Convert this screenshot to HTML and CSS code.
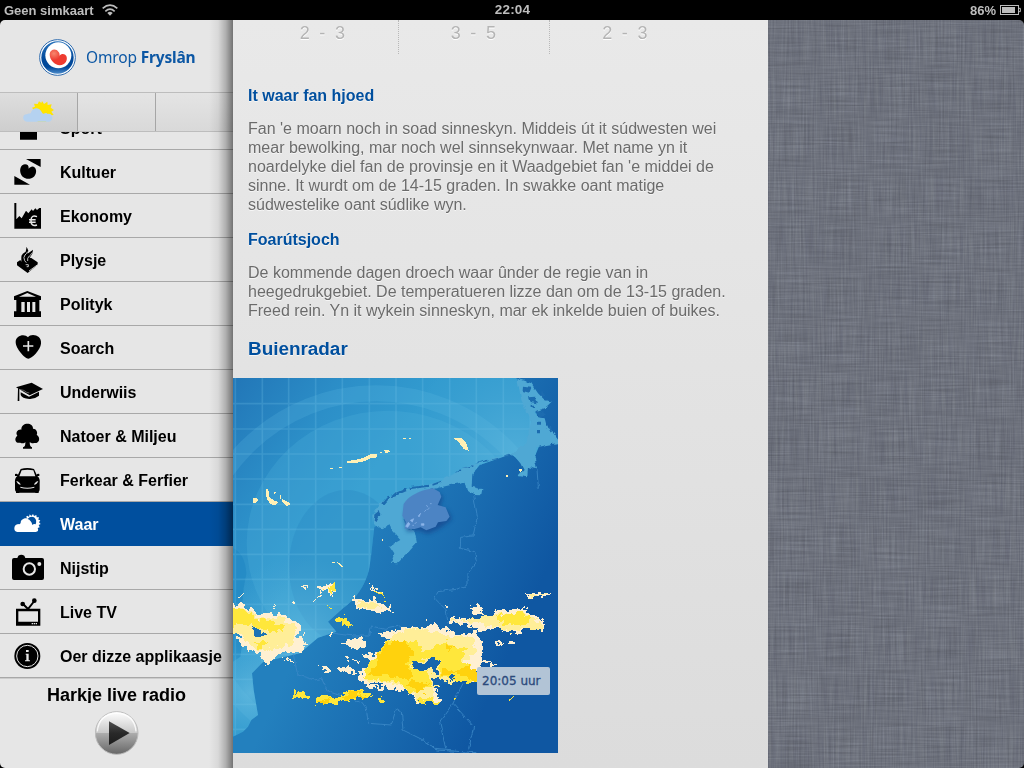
FILE: index.html
```html
<!DOCTYPE html>
<html lang="fy">
<head>
<meta charset="utf-8">
<title>Omrop Fryslân</title>
<link rel="stylesheet" href="styles.css">
</head>
<body>
<header class="status">
  <div class="status-left">Geen simkaart
    <svg class="wifi" viewBox="0 0 48 36"><g fill="none" stroke="#bdbdbd" stroke-width="5"><path d="M2 13Q24-6 46 13"/><path d="M10 22Q24 9 38 22"/></g><path d="M16 27Q24 20 32 27L24 35Z" fill="#bdbdbd"/></svg>
  </div>
  <div class="status-time">22:04</div>
  <div class="status-right">86%
    <svg class="battery" viewBox="0 0 63 30"><rect x="1.5" y="1.5" width="54" height="27" fill="none" stroke="#bdbdbd" stroke-width="3"/><rect x="6" y="6" width="39" height="18" fill="#bdbdbd"/><path d="M57 10h4v10h-4" fill="none" stroke="#bdbdbd" stroke-width="3"/></svg>
  </div>
</header>
<main class="app">
  <aside class="sidebar">
    <div class="brand">
      <svg class="logo" viewBox="0 0 111 111">
        <defs>
          <linearGradient id="ring" x1="0" y1="0" x2="0" y2="1"><stop offset="0" stop-color="#2a74bd"/><stop offset=".55" stop-color="#00489a"/><stop offset=".8" stop-color="#00489a"/><stop offset="1" stop-color="#4d8cca"/></linearGradient>
          <radialGradient id="heart" cx=".25" cy=".25" r=".7"><stop offset="0" stop-color="#f7876d"/><stop offset=".6" stop-color="#ee3b30"/></radialGradient>
        </defs>
        <circle cx="55.500" cy="55.500" r="53.500" fill="#fff" stroke="#2b69ad" stroke-width="3"/>
        <circle cx="55.500" cy="55.500" r="48.500" fill="url(#ring)"/>
        <circle cx="58" cy="49" r="39" fill="#fff"/>
        <path d="M58 38C51 27 33 31 32 45C31 62 48 79 62 79C80 78 87 62 82 51C78 43 67 43 61 50C63 44 61 41 58 38Z" fill="url(#heart)"/>
      </svg>
      <div class="brand-name">Omrop <b>Fryslân</b></div>
    </div>
    <div class="tabs">
      <div class="tab tab-active">
        <svg class="tab-icon" viewBox="0 0 93 63"><path d="M57 0l6 9 10-7 1 10 12-2-3 10 10 7-8 5 7 10-10 1 2 10-11 0-4 9H44L32 26l-5-6 9-3-3-9 11 1 4-8 7 5z" fill="#ffe400"/><path d="M12 62C-4 61-3 39 12 40C16 36 21 38 23 37C27 17 50 17 56 33Q59 39 62 38Q71 34 74 39C91 35 93 60 78 62Z" fill="#b5d2f0"/></svg>
      </div>
      <div class="tab"></div>
      <div class="tab"></div>
    </div>
    <nav class="menu">
      <div class="item"><svg class="icon" viewBox="0 0 144 132"><path d="M60 20h51v81H60z"/></svg>Sport</div>
      <div class="item"><svg class="icon" viewBox="0 0 144 132"><path d="M78 27h44v24zM43 78v26h47z"/><path d="M75 43C64 44 59 55 61 67C64 83 79 90 94 85C108 79 112 63 105 53C97 46 91 51 86 56Q87 43 75 43Z"/></svg>Kultuer</div>
      <div class="item"><svg class="icon" viewBox="0 0 144 132"><path d="M43 27h6v49l9-10 7 7 13-23 7 8 10-12 4 5 7-8 5 5 7-6 5 0v62H43z"/><path d="M111 68Q93 61 93 80Q93 99 111 93M87 77h20M87 85h20" fill="none" stroke="#e6e6e6" stroke-width="4.500"/></svg>Ekonomy</div>
      <div class="item"><svg class="icon" viewBox="0 0 144 132"><path d="M51 73l10-7 3 5v-14Q64 47 77 41L80 26l5 12-3 9 12-8 5-4-2 12-8 12 5 1 19 13v7L83 105 51 82z"/><path d="M83 41Q80 47 75 51Q69 58 74 68L79 74M97 44Q94 50 88 54Q81 60 83 69M77 80h8v6h-5M87 99L113 80" fill="none" stroke="#e6e6e6" stroke-width="2.500"/></svg>Plysje</div>
      <div class="item"><svg class="icon" viewBox="0 0 144 132"><path fill-rule="evenodd" d="M42 43L82 27l41 16v11h-5v34h5v17H42V88h7V54h-7zM57 44h51L82 33zM64 60h10v30H64zM81 60h9v30H81zM97 60h9v30H97z"/></svg>Polityk</div>
      <div class="item"><svg class="icon" viewBox="0 0 144 132"><path d="M47 48C47 27 75 22 84 34C93 21 126 27 123 53C121 72 95 98 85 98C75 98 47 68 47 48Z"/><path d="M85 45v31M69 60h31" stroke="#e6e6e6" stroke-width="5"/></svg>Soarch</div>
      <div class="item"><svg class="icon" viewBox="0 0 144 132"><path d="M48 52L95 38l34 19-40 19zM62 67l25 13 30-15v12Q103 88 88 87Q66 86 62 75zM54 56h4v37h-5z"/><path d="M57 58Q74 60 80 67L88 69" fill="none" stroke="#bbb" stroke-width="1.500"/></svg>Underwiis</div>
      <div class="item"><svg class="icon" viewBox="0 0 144 132"><path d="M64 47C63 24 100 24 99 44C112 44 113 59 110 62C124 72 117 90 102 87C97 90 92 86 89 85Q89 98 96 100v4H69v-4Q77 98 76 84C71 91 64 87 61 86C46 90 41 73 52 65C45 56 54 45 64 47Z"/></svg>Natoer &amp; Miljeu</div>
      <div class="item"><svg class="icon" viewBox="0 0 144 132"><path fill-rule="evenodd" d="M62 33Q82 27 102 33L110 50q2-4 8-2v6h-6q9 7 7 22v18q0 8-9 10H54q-9-2-9-10V77q-2-16 7-23h-7v-6q6-2 9 2zM65 37l-7 18h48l-6-18q-17-3-35 0zM49 69q4 11 13 11-2-8-13-11zM115 69q-11 3-13 11 9 0 13-11zM61 86q21 6 42 0v3q-21 6-42 0z"/><path d="M48 98h10v7H48zM106 98h10v7h-10z"/></svg>Ferkear &amp; Ferfier</div>
      <div class="item item-active"><svg class="icon" viewBox="0 0 144 132"><path fill="#fff" d="M52 90C39 89 40 67 55 66Q59 68 62 63C62 51 76 47 83 50L78 44l5-3 4 4 2-8 5 5 5-6 3 6 7-3 1 7 7 0-2 7 6 2-4 6 5 5-6 3 3 7-6 2Q118 89 107 90Z"/><path d="M83 51Q91 41 102 46Q112 54 107 67Q101 65 97 69Q94 55 83 51Z" fill="#004f9e"/></svg>Waar</div>
      <div class="item"><svg class="icon" viewBox="0 0 144 132"><path d="M42 36h10l3-7q9-5 18 0l3 7h50q6 0 6 6v54q0 6-6 6H42q-6 0-6-6V42q0-6 6-6z"/><circle cx="88" cy="69" r="17" fill="none" stroke="#e6e6e6" stroke-width="6"/><circle cx="118" cy="54" r="6" fill="#e6e6e6"/></svg>Nijstip</div>
      <div class="item"><svg class="icon" viewBox="0 0 144 132"><path fill-rule="evenodd" d="M48 56h73v51H48zM55 64v31h59V64z"/><path d="M69 42l15 15 19-24" fill="none" stroke="#000" stroke-width="6"/><circle cx="68" cy="42" r="7"/><circle cx="103" cy="32" r="7"/><path d="M95 101h17" stroke="#e6e6e6" stroke-width="4" stroke-dasharray="4 2"/></svg>Live TV</div>
      <div class="item"><svg class="icon" viewBox="0 0 144 132"><circle cx="82" cy="66" r="39"/><circle cx="82" cy="66" r="32" fill="none" stroke="#e6e6e6" stroke-width="3"/><path d="M78 48h8v6h-8zM77 59h9v20h4v3H75v-3h4V62h-2z" fill="#e6e6e6"/></svg>Oer dizze applikaasje</div>
    </nav>
    <footer class="radio">
      <div class="radio-label">Harkje live radio</div>
      <svg class="play" viewBox="0 0 132 132">
        <defs>
          <linearGradient id="btn" x1="0" y1="0" x2="0" y2="1"><stop offset="0" stop-color="#fff"/><stop offset=".5" stop-color="#c8c8c8"/><stop offset=".51" stop-color="#acacac"/><stop offset="1" stop-color="#666"/></linearGradient>
          <linearGradient id="tri" x1="0" y1="0" x2="0" y2="1"><stop offset="0" stop-color="#505050"/><stop offset=".5" stop-color="#292929"/><stop offset="1" stop-color="#1c1c1c"/></linearGradient>
        </defs>
        <circle cx="65" cy="66" r="64" fill="url(#btn)" stroke="#bcbcbc" stroke-width="3"/>
        <path d="M7 61Q12 9 65 6Q118 9 123 61" fill="none" stroke="#fff" stroke-width="4" opacity=".8"/>
        <path d="M42 31l62 35-62 36z" fill="url(#tri)"/>
      </svg>
    </footer>
  </aside>
  <section class="content">
    <div class="wind"><div class="wind-cell">2 - 3</div><div class="wind-cell">3 - 5</div><div class="wind-cell">2 - 3</div></div>
    <article class="article">
      <h3>It waar fan hjoed</h3>
      <p>Fan 'e moarn noch in soad sinneskyn. Middeis út it súdwesten wei<br>mear bewolking, mar noch wel sinnsekynwaar. Met name yn it<br>noardelyke diel fan de provinsje en it Waadgebiet fan 'e middei de<br>sinne. It wurdt om de 14-15 graden. In swakke oant matige<br>súdwestelike oant súdlike wyn.</p>
      <h3>Foarútsjoch</h3>
      <p>De kommende dagen droech waar ûnder de regie van in<br>heegedrukgebiet. De temperatueren lizze dan om de 13-15 graden.<br>Freed rein. Yn it wykein sinneskyn, mar ek inkelde buien of buikes.</p>
      <h2>Buienradar</h2>
    </article>
    <div class="radar">
      <svg class="map" viewBox="0 24 975 1125">
        <defs>
          <linearGradient id="land" gradientUnits="userSpaceOnUse" x1="230" y1="760" x2="760" y2="1000"><stop offset="0" stop-color="#2380be"/><stop offset=".5" stop-color="#1a6db1"/><stop offset="1" stop-color="#0f57a2"/></linearGradient>
          <linearGradient id="sea" gradientUnits="userSpaceOnUse" x1="0" y1="40" x2="400" y2="330"><stop offset="0" stop-color="#2277b8"/><stop offset=".55" stop-color="#2c8fc8"/><stop offset="1" stop-color="#329bcf"/></linearGradient>
          <radialGradient id="glow" gradientUnits="userSpaceOnUse" cx="200" cy="820" r="260"><stop offset="0" stop-color="#7cc9e8" stop-opacity=".5"/><stop offset="1" stop-color="#59b2db" stop-opacity="0"/></radialGradient>
          <radialGradient id="glow2" gradientUnits="userSpaceOnUse" cx="850" cy="240" r="330"><stop offset="0" stop-color="#6fc1e3" stop-opacity=".45"/><stop offset="1" stop-color="#59b2db" stop-opacity="0"/></radialGradient>
          <radialGradient id="glow3" gradientUnits="userSpaceOnUse" cx="50" cy="970" r="150"><stop offset="0" stop-color="#6fc1e3" stop-opacity=".6"/><stop offset="1" stop-color="#59b2db" stop-opacity="0"/></radialGradient>
          <clipPath id="seaclip"><path d="M0 24H850L880 80 910 130 930 200 905 260 880 290 835 252 740 285 700 334 610 345 500 390 440 465 424 470 414 560 408 600C396 650 365 690 330 715L285 755 310 785 255 803 200 850 90 876 57 910 62 960 75 1035 55 1050 45 1070 30 1085 0 1100Z"/></clipPath>
          <filter id="rough" x="-5%" y="-5%" width="110%" height="110%"><feTurbulence type="fractalNoise" baseFrequency=".06" numOctaves="2" seed="4"/><feDisplacementMap in="SourceGraphic" scale="32" xChannelSelector="R" yChannelSelector="G"/></filter>
          <filter id="coast" x="-5%" y="-5%" width="110%" height="110%"><feTurbulence type="fractalNoise" baseFrequency=".06" numOctaves="2" seed="9"/><feDisplacementMap in="SourceGraphic" scale="12" xChannelSelector="R" yChannelSelector="G"/></filter>
          <filter id="soft" x="-20%" y="-20%" width="140%" height="140%"><feGaussianBlur stdDeviation="7"/></filter>
        </defs>
        <rect y="24" width="975" height="1125" fill="url(#land)"/>
        <g clip-path="url(#seaclip)">
          <rect y="24" width="975" height="1125" fill="url(#sea)"/>
          <circle cx="430" cy="620" r="550" fill="none" stroke="#5fbce2" stroke-width="48" opacity=".22"/>
          <ellipse cx="465" cy="520" rx="424" ry="398" fill="#50b3dd" opacity=".26"/>
          <ellipse cx="340" cy="590" rx="172" ry="230" fill="#217fbe" opacity=".24"/>
          <rect y="24" width="975" height="1125" fill="url(#glow)"/>
          <rect y="24" width="975" height="1125" fill="url(#glow2)"/>
          <path d="M0 535Q36 550 40 610Q20 700 32 790L22 860 0 875Z" fill="#2389c4" opacity=".8"/>
          <rect y="24" width="975" height="1125" fill="url(#glow3)"/>
          <path d="M7 24v1125M88 24v1125M167 24v1125M248 24v1125M328 24v1125M409 24v1125M489 24v1125M569 24v1125M650 24v1125M730 24v1125M811 24v1125M892 24v1125M0 101h975M0 177h975M0 252h975M0 327h975M0 403h975M0 478h975M0 553h975M0 628h975M0 703h975M0 778h975M0 853h975M0 928h975M0 1003h975M0 1078h975" fill="none" stroke="#74c4e6" stroke-width="5" opacity=".25"/>
        </g>
        <g filter="url(#coast)">
          <path d="M853 26L895 40 915 70 935 90 955 96 935 115 905 125 908 140 935 145 942 172 960 185 985 218 940 225 911 232 905 262 912 298 885 290 883 322 855 318 872 300 862 280 842 256 780 262 735 287 718 310 716 350 748 358 745 373 720 372 700 356 695 335 630 350 555 370 515 402 512 445 520 475 545 482 552 517 522 552 493 580 475 578 484 550 470 528 502 510 475 480 470 463 445 475 420 463 418 435 440 400 490 365 620 335 700 290 835 251 880 220 895 150 865 90Z" fill="#4fa8d4"/>
          <path d="M870 50l25 3-6 15-20-5zM885 82l22-2 8 20-25-4zM925 60l12 18-12 2zM907 127l16-8 16 17-18 7zM940 175l15-5v15zM425 430l12-10 5 15-12 22-8-5zM443 402l22-25 8 3-22 26zM475 374l45-20 3 8-45 20zM530 352l55-8v7l-55 7zM598 342l25-9 2 5-26 9zM665 308l17-10 3 5zM690 294l28-8v4zM725 281l38-12v5zM770 270l25-6v4zM805 262l30-8v5zM890 104h16v8h-16zM915 155h9v9h-9zM912 180h6v10h-6z" fill="#1e6cb0"/>
        </g>
        <path d="M515 402L560 368 605 355 625 375 615 405 640 415 652 440 630 458 612 470 580 485 550 474 517 478 510 440Z" fill="#123e85" opacity=".6" filter="url(#soft)" transform="translate(5 7)"/>
        <path d="M512 402C525 380 550 368 575 360L600 355 620 366 625 380 614 405 638 412 650 440 640 453 615 457 608 470 580 481 563 472 545 477 515 476 518 455 508 437Z" fill="#4c84c4"/>
        <path d="M518 469l8-12 5 5-7 10zM532 451l10-5-4 10zM556 437l7-7-5 11zM565 461h8v5h-8zM580 405l5 7M591 401h5M583 420l7-7M545 462l6-6M574 425l6-6M538 466h5" stroke="#8db5ea" stroke-width="2" fill="#8db5ea"/>
        <g fill="none" stroke="#3c89c8" stroke-width="2.500" filter="url(#coast)">
          <path d="M722 375L733 440 720 498 683 502 682 535 725 545 730 575 705 610 705 645 670 658 615 665 605 685 640 720 645 760M912 298l4 55M300 790l60 8 50 0 5-30 40 10 45-10 20 15 60 5M180 850l15 65 50 15 20-5 20 40 100 30 15 20 5 45 70 5 15-50 15 10 5 55 60 30 35 25 60 5M660 1000l-40 55 18 80M660 1000l62 70-15 65M690 940l-30 60M610 1140l120 8"/>
        </g>
        <g transform="translate(1 587)">
          <g filter="url(#rough)" shape-rendering="crispEdges">
            <path fill="#fff0d2" d="M-15 112L35 116 70 145 105 142 155 150 205 180 190 205 225 240 190 262 140 262 100 300 80 262 40 255 20 220 -15 190ZM355 85L365 100 435 105 485 138 430 142 365 120ZM435 205L500 190 600 180 640 190 670 205 730 200 750 240 742 300 720 330 735 355 700 345 650 340 605 370 620 412 545 412 525 375 400 365 375 340 385 312 415 300 390 265 440 262 465 225ZM640 170L670 155 720 160 760 155 795 133 870 130 935 170 932 192 880 190 850 205 800 190 740 195 700 175ZM715 125L735 110 755 145 720 148ZM870 90L910 80 960 86 905 97ZM325 230L390 212 400 240 360 255ZM400 55L430 68 465 105 440 90ZM195 60l28 3-2 7zM250 60L305 55 310 85 270 75 235 110 265 85ZM300 212l-15-8 20-5zM245 295l50 20-10 6zM305 312l40-12 35 30-20-8zM785 228l25 5-15 8zM765 285l25 10-18 6zM70 105l5 20M175 108h15v8h-15zM145 275l35 12-2 6zM15 90l15-5-8 15zM120 115l12 14h-5zM740 285h35l-20 15zM828 228l14 4-8 8zM570 160h8v6h-8zM635 120h8v6h-8zM360 282h16v6h-16zM330 270l14 6-2 6zM200 200l12 5-6 6zM600 372l20 4-5 8z"/>
            <path fill="#ffee98" d="M-15 118L40 128 80 160 140 155 190 185 175 235 110 255 60 250 25 215 -15 195ZM370 110L430 108 440 130 400 130ZM480 205L560 185 600 200 650 210 720 215 730 260 690 290 700 330 600 370 600 410 550 410 520 360 400 345 395 310 430 280 465 225ZM650 165l70-5 70-15 80-5 60 35-5 15-60 0-25 10-110-30zM880 90l60-5-30 10z"/>
            <path fill="#ffe73a" d="M-15 118L30 130 70 160 155 175 145 200 80 190 40 175 -15 190ZM60 225l50 5-30 20zM275 70l30-15 5 25-20 0zM285 95l25 5M305 160l30-8 10 18 25 15-15 0-45-18zM280 122l15 3-5 10zM410 65l30 15 25 25-10-5zM790 150L860 138 900 160 860 180 800 170ZM465 230L550 225 570 260 600 245 640 230 660 245 710 245 680 280 710 300 740 345 690 350 650 335 620 330 620 290 580 275 530 300 590 320 590 360 530 385 500 350 430 340 385 335 410 290 440 250ZM180 380l25-2 25 12-15 8-35-4zM247 395l60 0 40-20 40 0 35 15-65 10-40 12-75 2zM545 405l40-12 35 18h-70zM435 395h12v20h-12zM658 392h14v10h-14zM828 400l12-8-5 12z"/>
            <path fill="#ffd20a" d="M470 230L515 225 540 260 515 295 545 330 520 345 450 325 395 330 440 290 425 270ZM625 310l40 10 40-20 35 25-10 25-30-20-70-5zM320 390l45-12 40 14-70 10zM250 402l40-1-15 11-25 0zM525 350l55 0-10 30-25 0zM640 240l20 5-15 8z"/>
            <path fill="#1e73b5" d="M55 190l20-5 10 15 15 8-10 5-30-8z"/>
            <path fill="#1766ad" d="M535 292l45-4 25-15 12 10-5 45-12-2-5-20-30 12-30-15zM400 352l60 3-5 6-50-2zM600 335l22 4 20 12-10 10-32-4zM470 365l40 10-5 5-30-4zM640 330l30 4-15 8z"/>
          </g>
        </g>
        <g fill="#fff0b5" shape-rendering="crispEdges">
          <path d="M285 297l16-4v4zM317 290h9v3h-9zM342 273l30-4 25-8 14-8h20v9l-20 3-13 8-25 5-30 2zM442 245h5v5h-5zM453 239h10l8 5-6 4h-8zM510 205h9v2h-9zM529 205h4v2h-4zM663 205l25 0 12 14 7 23-15-5-15-20zM857 297h12l-7 10zM820 316h5v5h-5zM60 384h12l5 6-10 8h-6zM98 355l8 5 4 22 15 10 12 5-8 8-16-2-12-18zM122 364l9 5-7 3zM140 376h4v12h-4zM147 387l24 12 1 5-10 4-15-14zM446 507h4v6h-4zM297 576h8v3h-8zM311 576l12 5 10 14-12-8z"/>
        </g>
      </svg>
      <div class="stamp">20:05 uur</div>
    </div>
  </section>
  <section class="linen">
    <svg class="fabric" width="256" height="748">
      <defs>
        <filter id="warp" x="0" y="0" width="100%" height="100%" color-interpolation-filters="sRGB"><feTurbulence type="fractalNoise" baseFrequency=".6 .02" numOctaves="2" seed="3"/><feColorMatrix values=".8 0 0 0 .1 .8 0 0 0 .1 .7 0 .1 0 .1 0 0 0 0 1"/></filter>
        <filter id="weft" x="0" y="0" width="100%" height="100%" color-interpolation-filters="sRGB"><feTurbulence type="fractalNoise" baseFrequency=".02 .6" numOctaves="2" seed="8"/><feColorMatrix values=".8 0 0 0 .1 .8 0 0 0 .1 .8 0 0 0 .1 0 0 0 0 1"/></filter>
      </defs>
      <rect class="threads" width="256" height="748" filter="url(#warp)"/>
      <rect class="threads" width="256" height="748" filter="url(#weft)"/>
    </svg>
  </section>
</main>
</body>
</html>
```

FILE: styles.css
```css
* { box-sizing: border-box; }
body {
  margin: 0;
  width: 1024px;
  height: 768px;
  overflow: hidden;
  background: #000;
  font-family: "Liberation Sans", Arial, sans-serif;
  font-size: 16px;
}
svg { display: block; }
.status {
  height: 20px;
  display: grid;
  grid-template-columns: 1fr auto 1fr;
  align-items: center;
  padding: 0 3px 0 4px;
  color: #bdbdbd;
  font-size: 13px;
  font-weight: bold;
  line-height: 19px;
}
.status-left, .status-right { display: flex; align-items: center; gap: 8px; height: 18px; }
.status-right { justify-content: flex-end; gap: 4px; }
.status-time { font-size: 13.5px; height: 20px; letter-spacing: .15px; }
.wifi { width: 16px; height: 12px; }
.battery { width: 21px; height: 10px; margin-top: -1px; }
.app {
  height: 748px;
  display: flex;
  border-radius: 5px;
  overflow: hidden;
}
.sidebar {
  position: relative;
  width: 233px;
  flex: none;
  display: flex;
  flex-direction: column;
  background: #e6e6e6;
}
.sidebar::after {
  content: "";
  position: absolute;
  top: 0;
  right: 0;
  bottom: 0;
  width: 24px;
  background: linear-gradient(to right, rgba(0,0,0,0), rgba(0,0,0,.06) 38%, rgba(0,0,0,.24) 70%, rgba(0,0,0,.5));
}
.brand {
  height: 72px;
  display: flex;
  align-items: center;
  gap: 10px;
  padding: 2px 0 0 39px;
}
.logo { width: 37px; height: 37px; }
.brand-name {
  font-family: "Noto Sans", "Open Sans", sans-serif;
  font-size: 15.5px;
  line-height: 20px;
  color: #0c57a4;
  white-space: nowrap;
  letter-spacing: -.17px;
}
.tabs { height: 40px; display: flex; flex: none; border-top: 1px solid #bdbdbd; border-bottom: 1px solid #bdbdbd; }
.tab { flex: 1; background: linear-gradient(#e4e4e4, #d9d9d9); }
.tab + .tab { border-left: 1px solid #a6a6a6; }
.tab-active { flex: none; width: 77px; background: linear-gradient(#dedede, #cecece); }
.tab-icon { width: 31px; height: 21px; margin: 8px 0 0 23px; }
.menu {
  height: 546px;
  flex: none;
  display: flex;
  flex-direction: column;
  justify-content: flex-end;
  overflow: hidden;
}
.item {
  height: 44px;
  flex: none;
  display: flex;
  gap: 12px;
  border-bottom: 1px solid #a8a8a8;
  font-weight: bold;
  line-height: 45px;
  white-space: nowrap;
}
.item-active { background: #004f9e; border-bottom-color: #004f9e; color: #fff; }
.icon { width: 48px; height: 44px; flex: none; }
.radio { flex: 1; display: flex; flex-direction: column; align-items: center; border-top: 1px solid #ccc; }
.radio-label { height: 24px; font-size: 18px; font-weight: bold; line-height: 32px; overflow: hidden; }
.play { width: 44px; height: 44px; margin-top: 8px; }
.content {
  width: 535px;
  flex: none;
  background: linear-gradient(#e9e9e9, #dcdcdc);
}
.wind { display: flex; height: 34px; padding-left: 15px; }
.wind-cell {
  width: 151px;
  padding-left: 1px;
  text-align: center;
  font-size: 18px;
  line-height: 26px;
  letter-spacing: 2.3px;
  color: #b4b4b4;
  text-shadow: 0 1px #fff;
  border-right: 1px dotted #b8b8b8;
}
.wind-cell:last-child { border-right: 0; }
.article { padding: 32px 15px 0; color: #6b6b6b; text-shadow: 0 1px #f6f6f6; }
.article h3 { margin: 0 0 14px; font-size: 16px; line-height: 19px; color: #004f9e; }
.article p { margin: 0 0 16px; line-height: 19px; white-space: nowrap; }
.article h2 { margin: 17px 0 19px; font-size: 18.9px; line-height: 24px; height: 22px; color: #004f9e; }
.radar { position: relative; width: 325px; height: 375px; }
.map { width: 325px; height: 375px; }
.stamp {
  position: absolute;
  left: 244px;
  top: 289px;
  width: 73px;
  height: 28px;
  padding-left: 5px;
  border-radius: 2px;
  background: #b2c4d6;
  color: #2c4a7c;
  font: 12px/28px "DejaVu Sans", sans-serif;
  -webkit-text-stroke: .3px #2c4a7c;
}
.linen { flex: 1; background: #6d717c; }
.threads { mix-blend-mode: overlay; opacity: .17; }
```
